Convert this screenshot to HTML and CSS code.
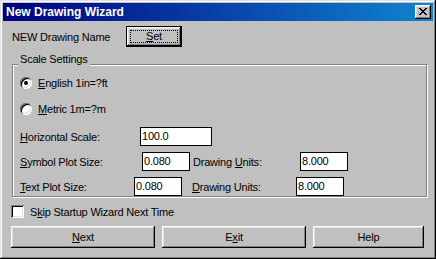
FILE: index.html
```html
<!DOCTYPE html>
<html lang="en">
<head>
    <meta charset="UTF-8">
    <title>New Drawing Wizard</title>
    <link rel="stylesheet" href="styles.css">
</head>
<body>
    <div class="window">
        <div class="titlebar">
            <span class="title">New Drawing Wizard</span>
            <button class="close" title="Close">
                <svg width="8" height="7" viewBox="0 0 8 7" shape-rendering="crispEdges">
                    <path d="M0 0h2v1H0zM6 0h2v1H6zM1 1h2v1H1zM5 1h2v1H5zM2 2h4v1H2zM3 3h2v1H3zM2 4h4v1H2zM1 5h2v1H1zM5 5h2v1H5zM0 6h2v1H0zM6 6h2v1H6z" fill="#000"/>
                </svg>
            </button>
        </div>

        <div class="content">
            <div class="name-row">
                <span class="name-label">NEW Drawing Name</span>
                <button class="btn btn-default set"><span class="focus"><u>S</u>et</span></button>
            </div>

            <fieldset class="group">
                <legend>Scale Settings</legend>

                <label class="radio-row">
                    <span class="radio checked"></span>
                    <span><u>E</u>nglish 1in=?ft</span>
                </label>
                <label class="radio-row">
                    <span class="radio"></span>
                    <span><u>M</u>etric 1m=?m</span>
                </label>

                <div class="field-row">
                    <span class="lbl lbl-horiz"><u>H</u>orizontal Scale:</span>
                    <span class="input input-wide">100.0</span>
                </div>
                <div class="field-row">
                    <span class="lbl lbl-symbol"><u>S</u>ymbol Plot Size:</span>
                    <span class="input">0.080</span>
                    <span class="lbl units units-symbol">Drawing <u>U</u>nits:</span>
                    <span class="input">8.000</span>
                </div>
                <div class="field-row">
                    <span class="lbl lbl-text"><u>T</u>ext Plot Size:</span>
                    <span class="input">0.080</span>
                    <span class="lbl units units-text"><u>D</u>rawing Units:</span>
                    <span class="input">8.000</span>
                </div>
            </fieldset>

            <label class="check-row">
                <span class="checkbox"></span>
                <span>S<u>k</u>ip Startup Wizard Next Time</span>
            </label>

            <div class="buttons">
                <button class="btn"><u>N</u>ext</button>
                <button class="btn">E<u>x</u>it</button>
                <button class="btn">Help</button>
            </div>
        </div>
    </div>
</body>
</html>
```

FILE: styles.css
```css
body {
    margin: 0;
    font-family: "Liberation Sans", Arial, sans-serif;
    font-size: 11px;
    color: #000;
}
.window {
    width: 436px;
    height: 259px;
    box-sizing: border-box;
    padding: 3px;
    background: #c0c0c0;
    box-shadow: inset -1px -1px #000, inset 1px 1px #dfdfdf,
                inset -2px -2px #808080, inset 2px 2px #fff;
}
.titlebar {
    height: 18px;
    display: flex;
    align-items: center;
    justify-content: space-between;
    padding: 0 2px 0 3px;
    background: linear-gradient(to right, #000080, #1084d0);
}
.title {
    color: #fff;
    font-weight: bold;
    font-size: 12px;
}
button {
    font: inherit;
    letter-spacing: inherit;
    color: #000;
    padding: 0;
    border: 0;
    background: #c0c0c0;
}
.close {
    width: 16px;
    height: 14px;
    display: flex;
    align-items: center;
    justify-content: center;
    padding: 0 1px 1px 0;
    box-shadow: inset -1px -1px #000, inset 1px 1px #fff,
                inset -2px -2px #808080, inset 2px 2px #dfdfdf;
}

.content {
    padding: 0 9px 0 8px;
    letter-spacing: -0.2px;
}
.name-row {
    display: flex;
    align-items: center;
    height: 21px;
    margin-top: 5px;
}
.name-label {
    width: 114px;
    margin-left: 1px;
}
.btn {
    height: 22px;
    box-shadow: inset -1px -1px #000, inset 1px 1px #fff,
                inset -2px -2px #808080, inset 2px 2px #dfdfdf;
}
.btn-default {
    border: 1px solid #000;
}
.set {
    width: 56px;
    height: 21px;
    padding: 3px;
}
.focus {
    display: block;
    height: 100%;
    box-sizing: border-box;
    border: 1px dotted #000;
    line-height: 11px;
}

/* group box */
.group {
    width: 415px;
    box-sizing: border-box;
    margin: 6px 0 0 1px;
    padding: 2px 0 0 7px;
    border: 1px solid #808080;
    box-shadow: inset 1px 1px #fff, 1px 1px #fff;
    min-width: 0;
}
.group legend {
    line-height: 13px;
    padding: 0 2px 9px;
    margin-left: -2px;
    background: #c0c0c0;
}
.radio-row {
    display: flex;
    align-items: center;
    gap: 6px;
    height: 12px;
}
.radio-row + .radio-row {
    margin-top: 14px;
}
.radio {
    width: 12px;
    height: 12px;
    border-radius: 50%;
    background: #fff;
    box-shadow: inset 1px 1px #808080, inset -1px -1px #fff,
                inset 2px 2px #000, inset -2px -2px #dfdfdf;
    display: flex;
    align-items: center;
    justify-content: center;
}
.radio.checked::after {
    content: "";
    width: 4px;
    height: 4px;
    border-radius: 50%;
    background: #000;
}
.field-row {
    display: flex;
    align-items: center;
    height: 19px;
    margin-top: 6px;
}
.radio-row + .field-row {
    margin-top: 12px;
}
.lbl-horiz { width: 120px; }
.lbl-symbol { width: 122px; }
.lbl-text { width: 114px; }
.units-symbol { width: 107px; margin-left: 3px; }
.units-text { width: 104px; margin-left: 10px; }
.input {
    width: 48px;
    height: 19px;
    box-sizing: border-box;
    border: 1px solid #000;
    background: #fff;
    padding-left: 1px;
    line-height: 17px;
}
.input-wide {
    width: 72px;
}

/* bottom */
.check-row {
    display: flex;
    align-items: center;
    gap: 6px;
    height: 13px;
    margin-top: 8px;
}
.checkbox {
    width: 13px;
    height: 13px;
    background: #fff;
    box-shadow: inset 1px 1px #808080, inset -1px -1px #fff,
                inset 2px 2px #000, inset -2px -2px #dfdfdf;
}
.buttons {
    display: grid;
    grid-template-columns: 144px 144px 111px;
    gap: 7px;
    margin-top: 8px;
}
```
